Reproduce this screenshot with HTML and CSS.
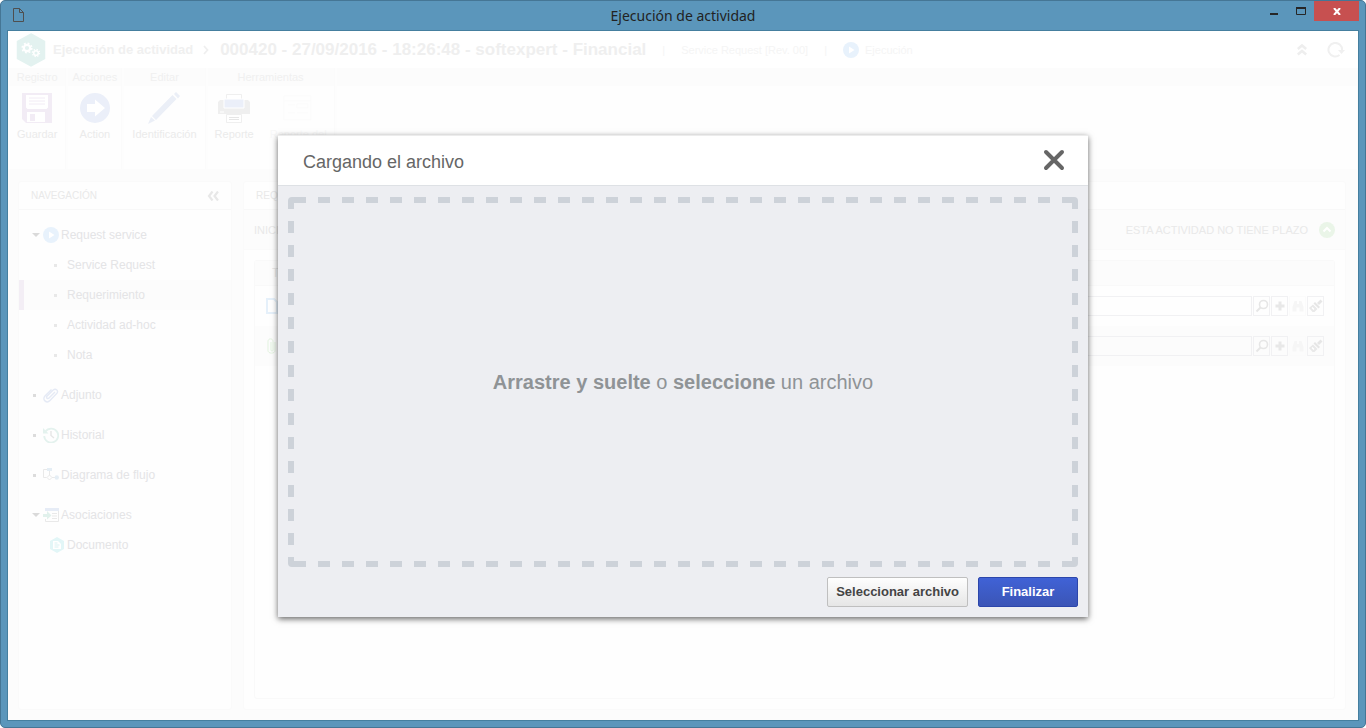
FILE: index.html
```html
<!DOCTYPE html>
<html lang="es">
<head>
    <meta charset="UTF-8">
    <meta name="viewport" content="width=device-width, initial-scale=1.0">
    <title>Ejecución de actividad</title>
    <link rel="stylesheet" href="styles.css">
</head>
<body>
    <!-- Iconos compartidos -->
    <svg class="sprite" aria-hidden="true">
        <symbol id="i-play" viewBox="0 0 16 16">
            <circle cx="8" cy="8" r="8" fill="#e8f2fc"/>
            <path d="M6 4.5v7L11.5 8z" fill="#fff"/>
        </symbol>
        <symbol id="i-search" viewBox="0 0 16 16">
            <circle cx="9.5" cy="6.5" r="4" fill="none" stroke="#e6e6e6" stroke-width="1.6"/>
            <path d="M6.5 9.5L2.5 13.5" stroke="#e6e6e6" stroke-width="2"/>
        </symbol>
        <symbol id="i-plus" viewBox="0 0 16 16">
            <path d="M6.5 3.5h3v3h3v3h-3v3h-3v-3h-3v-3h3z" fill="#e8e8e8"/>
        </symbol>
        <symbol id="i-find" viewBox="0 0 16 16">
            <path d="M4.5 3H7v3h2V3h2.5l2 6v4.5h-4v-4h-3v4h-4V9z" fill="#f6f6f6"/>
        </symbol>
        <symbol id="i-brush" viewBox="0 0 16 16">
            <path d="M12.5 1.5l2 2L11 7 9 5z" fill="#e6e6e6"/>
            <path d="M7 4l5 5-1.500 1.500-5-5z" fill="#e6e6e6"/>
            <path d="M5 6.500L9.500 11l-3 3H4.500l-3.500-4z" fill="#e9e9e9"/>
            <path d="M4 9.500l2 2" stroke="#fff" stroke-width="1.500"/>
        </symbol>
    </svg>

    <div class="window">
        <header class="titlebar">
            <svg class="app-icon" viewBox="0 0 11 14"><path d="M.5 .5h6l4 4v9H.5zM6.5 .5v4h4" fill="none" stroke="#4f4f4f"/></svg>
            <h1>Ejecución de actividad</h1>
            <div class="window-buttons">
                <button aria-label="Minimizar"><svg width="10" height="10" viewBox="0 0 10 10"><path d="M1 7h8v2H1z" fill="#262626"/></svg></button>
                <button aria-label="Maximizar"><svg width="10" height="8" viewBox="0 0 10 8"><path d="M.5 .5h9v7h-9z" fill="none" stroke="#262626"/><path d="M0 0h10v2H0z" fill="#262626"/></svg></button>
                <button class="win-close" aria-label="Cerrar"><svg width="8" height="7" viewBox="0 0 8 7"><path d="M1 0l6 7M7 0L1 7" stroke="#fff" stroke-width="2"/></svg></button>
            </div>
        </header>

        <main class="content">
            <div class="heading">
                <svg class="logo" viewBox="0 0 30 34">
                    <path d="M15 1l13.5 7.5v17L15 33 1.5 25.5v-17z" fill="#e3f2f0" stroke="#e3f2f0" stroke-width="1.5"/>
                    <circle cx="11" cy="15" r="3.2" fill="none" stroke="#fff" stroke-width="2.2"/>
                    <circle cx="11" cy="15" r="4.8" fill="none" stroke="#fff" stroke-width="1.6" stroke-dasharray="1.9 1.87"/>
                    <circle cx="20" cy="20" r="2.3" fill="none" stroke="#fff" stroke-width="1.6"/>
                    <circle cx="20" cy="20" r="3.6" fill="none" stroke="#fff" stroke-width="1.2" stroke-dasharray="1.4 1.43"/>
                </svg>
                <span class="crumb">Ejecución de actividad</span>
                <svg class="crumb-arrow" viewBox="0 0 6 10"><path d="M1 1l3.5 4L1 9" fill="none" stroke="#efefef" stroke-width="1.8"/></svg>
                <span class="record">000420 - 27/09/2016 - 18:26:48 - softexpert - Financial</span>
                <span class="meta">|</span>
                <span class="meta">Service Request [Rev. 00]</span>
                <span class="meta">|</span>
                <span class="meta state"><svg width="16" height="16"><use href="#i-play"/></svg>Ejecución</span>
                <div class="heading-tools">
                    <button aria-label="Contraer"><svg width="10" height="13" viewBox="0 0 10 13"><path d="M.8 6L5 2.5 9.200 6M.8 11.5L5 8l4.200 3.500" fill="none" stroke="#eee" stroke-width="2.5"/></svg></button>
                    <button aria-label="Actualizar"><svg width="18" height="16" viewBox="0 0 18 16"><path d="M12.5 13A6.800 6.800 0 1 1 15 8.500" fill="none" stroke="#f0f0f0" stroke-width="2"/><path d="M11 8h7l-3.500 4z" fill="#f0f0f0"/></svg></button>
                </div>
            </div>

            <div class="toolbar">
                <section class="group">
                    <h2>Registro</h2>
                    <div class="tools">
                        <button>
                            <svg width="32" height="32" viewBox="0 0 32 32"><path d="M1 1h30v30H5l-4-4z" fill="#f2ecf5"/><path d="M5 3h22v12.500l-1.500 1.500h-19L5 15.500zM6 20h20v10H6z" fill="#fff"/><path d="M8 6h16M8 9h16M8 12h16" stroke="#f2ecf5"/><path d="M9 22h5v7H9zM24 20h2v10h-2z" fill="#f2ecf5"/></svg>
                            Guardar
                        </button>
                    </div>
                </section>
                <section class="group">
                    <h2>Acciones</h2>
                    <div class="tools">
                        <button>
                            <svg width="32" height="32" viewBox="0 0 32 32"><circle cx="16" cy="16" r="15" fill="#ebeff9"/><path d="M8 12h8V7.500L26 16l-10 8.500V20H8z" fill="#fff"/></svg>
                            Action
                        </button>
                    </div>
                </section>
                <section class="group">
                    <h2>Editar</h2>
                    <div class="tools">
                        <button>
                            <svg width="32" height="32" viewBox="0 0 32 32"><path d="M26 2l2-2 4 4-2 2.500zM24.500 3l4 4L8 28l-4-4zM3 25l4 3.500L0 32z" fill="#ebeff7"/></svg>
                            Identificación
                        </button>
                    </div>
                </section>
                <section class="group">
                    <h2>Herramientas</h2>
                    <div class="tools wide">
                        <button>
                            <svg width="32" height="32" viewBox="0 0 32 32"><path d="M2 8h28l2 2v12H0V10z" fill="#efefef"/><path d="M8.500 2.500h15v13h-15zM8.500 22.500h15v8h-15z" fill="#fff" stroke="#efefef"/><path d="M6 7h20v9H6z" fill="#ebeff9" stroke="#fff"/><path d="M2 20h4" stroke="#fff"/><path d="M11 25.500h10M11 27.500h10" stroke="#e6e6e6"/></svg>
                            Reporte
                        </button>
                        <button class="off" disabled>
                            <svg width="32" height="32" viewBox="0 0 32 32"><path d="M2 4h27v5H2zM2 9v19h27V9M6 13h7M15 12h11v4H15zM6 21h7M15 21h11" fill="none" stroke="#fbfbfb"/></svg>
                            Reporte del
                        </button>
                    </div>
                </section>
                <section class="group rest"><h2></h2></section>
            </div>

            <div class="panels">
                <nav class="panel nav">
                    <h2 class="panel-title">NAVEGACIÓN
                        <button aria-label="Ocultar"><svg width="12" height="10" viewBox="0 0 12 10"><path d="M5.500 .5L2 5l3.500 4.500M11 .5L7.500 5l3.500 4.500" fill="none" stroke="#e8e8e8" stroke-width="2.2"/></svg></button>
                    </h2>
                    <ul class="tree">
                        <li>
                            <a href="#"><i class="caret"></i><svg width="16" height="16"><use href="#i-play"/></svg>Request service</a>
                            <ul>
                                <li><a href="#"><i class="dot"></i>Service Request</a></li>
                                <li><a href="#" class="active"><i class="dot"></i>Requerimiento</a></li>
                                <li><a href="#"><i class="dot"></i>Actividad ad-hoc</a></li>
                                <li><a href="#"><i class="dot"></i>Nota</a></li>
                            </ul>
                        </li>
                        <li><a href="#"><i class="dot dark"></i><svg width="16" height="16" viewBox="0 0 16 16"><path d="M12 5L6 11c-1.500 1.500-3.300-.4-1.800-1.900l6-6c2.500-2.500 6 1 3.500 3.500L7 13.500c-3.500 3.500-8.300-1-5-4.500l6.500-6.500" fill="none" stroke="#e5eaf5" stroke-width="1.4"/></svg>Adjunto</a></li>
                        <li><a href="#"><i class="dot dark"></i><svg width="16" height="16" viewBox="0 0 16 16"><path d="M2.500 4.500A7 7 0 1 1 1.200 9" fill="none" stroke="#e4f2ee" stroke-width="1.8"/><path d="M0 1v5.500h5.500z" fill="#e4f2ee"/><path d="M8 4v4.500l3 2.500" fill="none" stroke="#e6e6e6" stroke-width="1.4"/></svg>Historial</a></li>
                        <li><a href="#"><i class="dot dark"></i><svg width="16" height="16" viewBox="0 0 16 16"><path d="M5 2.500H.5v8h3M6.500 4v4M6.500 8L9 10.500 6.500 13 4 10.500zM9 10.500h3" fill="none" stroke="#e9e9e9"/><path d="M4 1h5v3H4z" fill="#e5eef5"/><circle cx="13.800" cy="10.500" r="2.200" fill="#e5eef5"/></svg>Diagrama de flujo</a></li>
                        <li>
                            <a href="#"><i class="caret"></i><svg width="16" height="16" viewBox="0 0 16 16"><path d="M2 1h14v3H2z" fill="#e6ecf6"/><path d="M15.500 4v10.500h-13V12M9 6.500h5M9 9h5M9 11.500h5" fill="none" stroke="#e9e9e9"/><path d="M0 7h4V4l4.500 4.500L4 12.500V10H0z" fill="#e1f1ec"/></svg>Asociaciones</a>
                            <ul>
                                <li><a href="#" class="doc"><svg width="16" height="16" viewBox="0 0 16 16"><path d="M8 0l7 4v8l-7 4-7-4V4z" fill="#e2f6f7"/><path d="M4 4h5l3 3v5H4z" fill="#fff"/><path d="M5.500 6h3M5.500 8h5M5.500 10h4" stroke="#d9f1f2"/></svg>Documento</a></li>
                            </ul>
                        </li>
                    </ul>
                </nav>

                <section class="panel detail">
                    <h2 class="panel-title">REQUERIMIENTO</h2>
                    <div class="status">
                        <span>INICIO</span>
                        <span class="due">ESTA ACTIVIDAD NO TIENE PLAZO</span>
                        <svg width="16" height="16" viewBox="0 0 16 16"><circle cx="8" cy="8" r="8" fill="#eaf5e8"/><path d="M4.500 9.500L8 6l3.500 3.500" fill="none" stroke="#fff" stroke-width="2"/></svg>
                    </div>
                    <div class="form">
                        <div class="form-title">Tipo</div>
                        <div class="field">
                            <svg width="12" height="16" viewBox="0 0 12 16"><path d="M1 1h7l3 3v11H1z" fill="none" stroke="#e5f0fa" stroke-width="2"/></svg>
                            <input type="text" aria-label="Documento">
                            <div class="field-tools">
                                <button aria-label="Buscar"><svg width="16" height="16"><use href="#i-search"/></svg></button>
                                <button aria-label="Agregar"><svg width="16" height="16"><use href="#i-plus"/></svg></button>
                                <button class="off" aria-label="Ver" disabled><svg width="16" height="16"><use href="#i-find"/></svg></button>
                                <button aria-label="Limpiar"><svg width="16" height="16"><use href="#i-brush"/></svg></button>
                            </div>
                        </div>
                        <div class="field alt">
                            <svg width="12" height="16" viewBox="0 0 12 16"><path d="M5 4v8c0 1.500 2 1.500 2 0V3.500c0-3.500-5-3.500-5 0v9c0 3.500 7 3.500 7 0V4" fill="none" stroke="#e2f3df"/></svg>
                            <input type="text" aria-label="Adjunto">
                            <div class="field-tools">
                                <button aria-label="Buscar"><svg width="16" height="16"><use href="#i-search"/></svg></button>
                                <button aria-label="Agregar"><svg width="16" height="16"><use href="#i-plus"/></svg></button>
                                <button class="off" aria-label="Ver" disabled><svg width="16" height="16"><use href="#i-find"/></svg></button>
                                <button aria-label="Limpiar"><svg width="16" height="16"><use href="#i-brush"/></svg></button>
                            </div>
                        </div>
                    </div>
                </section>
            </div>

            <div class="overlay">
                <div class="modal" role="dialog" aria-labelledby="modal-title">
                    <div class="modal-header">
                        <h2 id="modal-title">Cargando el archivo</h2>
                        <button class="modal-close" aria-label="Cerrar"><svg width="22" height="22" viewBox="0 0 22 22"><path d="M3 3l16 16M19 3L3 19" stroke="#666" stroke-width="4" stroke-linecap="round"/></svg></button>
                    </div>
                    <div class="modal-body">
                        <div class="dropzone">
                            <p><b>Arrastre y suelte</b> o <b>seleccione</b> un archivo</p>
                        </div>
                        <div class="modal-actions">
                            <button class="btn">Seleccionar archivo</button>
                            <button class="btn primary">Finalizar</button>
                        </div>
                    </div>
                </div>
            </div>
        </main>
    </div>
</body>
</html>
```

FILE: styles.css
```css
* {
    margin: 0;
    padding: 0;
    box-sizing: border-box;
}

body {
    background: #fff;
    font-family: "Liberation Sans", Arial, sans-serif;
    font-size: 12px;
    color: #e8e8e8;
}

button {
    border: none;
    background: none;
    font: inherit;
    color: inherit;
    cursor: pointer;
}

ul {
    list-style: none;
}

a {
    color: inherit;
    text-decoration: none;
}

svg {
    display: block;
    flex: none;
}

.sprite {
    position: absolute;
    width: 0;
    height: 0;
}

/* Ventana */
.window {
    display: flex;
    flex-direction: column;
    height: 100vh;
    padding: 0 6px 6px;
    background: #5b96bb;
    border: 1px solid #457695;
    border-radius: 5px;
    overflow: hidden;
}

.titlebar {
    display: grid;
    grid-template-columns: 1fr auto 1fr;
    height: 29px;
    flex: none;
}

.titlebar h1 {
    font-family: "Noto Sans", "Open Sans", sans-serif;
    font-size: 14px;
    font-weight: normal;
    line-height: 29px;
    color: #222;
}

.app-icon {
    width: 11px;
    height: 14px;
    margin: 7px 0 0 6px;
}

.window-buttons {
    display: flex;
    justify-content: flex-end;
}

.window-buttons button {
    display: flex;
    justify-content: center;
    align-items: center;
    width: 27px;
    height: 20px;
}

.window-buttons .win-close {
    width: 45px;
    background: #c75050;
}

/* Contenido */
.content {
    position: relative;
    display: flex;
    flex-direction: column;
    flex: 1;
    min-height: 0;
    background: #fcfcfc;
    border: 1px solid #457f9f;
}

.heading {
    display: flex;
    align-items: center;
    height: 37px;
    padding: 0 13px 0 8px;
    background: #fff;
}

.logo {
    width: 30px;
    height: 34px;
}

.crumb {
    margin-left: 7px;
    font-size: 13px;
    font-weight: bold;
    color: #f0f0f0;
}

.crumb-arrow {
    width: 6px;
    height: 10px;
    margin: 0 11px 0 10px;
}

.record {
    font-size: 17px;
    font-weight: bold;
    color: #efefef;
}

.meta {
    margin-left: 16px;
    font-size: 11px;
    color: #f5f5f5;
}

.state {
    display: flex;
    align-items: center;
    gap: 6px;
}

.heading-tools {
    display: flex;
    align-items: center;
    gap: 20px;
    margin-left: auto;
}

/* Barra de herramientas */
.toolbar {
    display: flex;
    gap: 2px;
    height: 101px;
    flex: none;
    padding-left: 1px;
    background: #fdfdfd;
}

.group {
    background: #fefefe;
    min-width: 54px;
    border-right: 1px solid #fbfbfb;
}

.group h2 {
    height: 18px;
    background: #fcfcfc;
    font-size: 11px;
    font-weight: normal;
    line-height: 18px;
    text-align: center;
    color: #f0f0f0;
}

.tools {
    display: flex;
    justify-content: center;
    padding: 6px 8px;
}

.tools button {
    display: flex;
    flex-direction: column;
    align-items: center;
    gap: 3px;
    font-size: 11px;
    line-height: 14px;
    color: #ebebeb;
}

.tools.wide {
    gap: 16px;
    padding: 6px 7px;
}

.tools .off {
    color: #f8f8f8;
}

.rest {
    flex: 1;
}

/* Paneles */
.panels {
    display: grid;
    grid-template-columns: 214px 1fr;
    gap: 11px;
    flex: 1;
    min-height: 0;
    padding: 12px 12px 10px 10px;
}

.panel {
    display: flex;
    flex-direction: column;
    background: #fefefe;
    border: 1px solid #fafafa;
    border-radius: 3px;
}

.panel-title {
    display: flex;
    justify-content: space-between;
    align-items: center;
    height: 28px;
    padding: 0 12px;
    border-bottom: 1px solid #f8f8f8;
    font-size: 10px;
    font-weight: normal;
    color: #e9e9e9;
}

.tree {
    display: flex;
    flex-direction: column;
    gap: 10px;
    padding-top: 10px;
    color: #e4e4e6;
}

.tree a {
    display: flex;
    align-items: center;
    height: 30px;
    padding-left: 13px;
    gap: 2px;
}

.tree ul a {
    padding-left: 35px;
    gap: 10px;
}

.tree ul .active {
    padding-left: 30px;
    background: #fcfcfc;
    border-left: 5px solid #f3eef5;
}

.tree ul .doc {
    padding-left: 30px;
    gap: 2px;
}

.caret {
    margin-right: 1px;
    border: 4px solid transparent;
    border-top-color: #dadada;
    border-bottom: none;
}

.dot {
    width: 3px;
    height: 3px;
    background: #e8e8e8;
}

.dot.dark {
    margin-right: 5px;
    margin-left: 1px;
    background: #dcdcdc;
}

.status {
    display: flex;
    align-items: center;
    height: 40px;
    padding: 0 10px;
    border-bottom: 1px solid #fafafa;
    background: #fcfcfc;
    font-size: 11px;
    color: #e9e9e9;
}

.due {
    margin: 0 11px 0 auto;
}

.form {
    flex: 1;
    margin: 10px;
    border: 1px solid #f9f9f9;
    border-radius: 3px;
}

.form-title {
    height: 25px;
    padding-left: 17px;
    background: #fcfcfc;
    border-bottom: 1px solid #f9f9f9;
    line-height: 24px;
}

.field {
    display: flex;
    align-items: center;
    gap: 10px;
    height: 40px;
    padding: 0 10px 0 11px;
}

.field.alt {
    background: #fcfcfc;
}

.field input {
    flex: 1;
    height: 20px;
    border: 1px solid #f1f1f3;
    background: transparent;
}

.field-tools {
    display: flex;
    gap: 1px;
    margin-left: -9px;
}

.field-tools button {
    display: flex;
    justify-content: center;
    align-items: center;
    width: 17px;
    height: 20px;
    border: 1px solid #f1f1f3;
}

.field-tools .off {
    border-color: #fbfbfb;
}

/* Ventana modal */
.overlay {
    position: absolute;
    inset: 0;
    display: flex;
    justify-content: center;
    align-items: center;
}

.modal {
    width: 60%;
    background: #edeef2;
    border-top: 1px solid #ececec;
    box-shadow: 0 2px 6px rgba(0, 0, 0, 0.6);
    color: #666;
}

.modal-header {
    display: flex;
    justify-content: space-between;
    align-items: center;
    height: 50px;
    padding: 0 23px 0 25px;
    background: #fff;
    border-bottom: 1px solid #dee1e5;
}

.modal-header h2 {
    padding-top: 4px;
    font-size: 18px;
    font-weight: normal;
}

.modal-body {
    display: flex;
    flex-direction: column;
    gap: 10px;
    padding: 11px 10px 10px;
}

/* Borde discontinuo: trazos de 12px cada 24px */
.dropzone {
    --dash: #cdd2d9 0 12px, transparent 12px 24px;
    display: flex;
    justify-content: center;
    align-items: center;
    height: 370px;
    padding-top: 2px;
    background:
        repeating-linear-gradient(90deg, #cdd2d9 0 6px, transparent 6px 6px, var(--dash)) 6px 0 / 100% 6px no-repeat,
        repeating-linear-gradient(90deg, var(--dash)) 6px 100% / 100% 6px no-repeat,
        repeating-linear-gradient(var(--dash)) 0 0 / 6px 100% no-repeat,
        repeating-linear-gradient(var(--dash)) 100% 0 / 6px 100% no-repeat;
    border-radius: 4px;
    font-size: 20px;
    color: #8f9396;
}

.modal-actions {
    display: flex;
    justify-content: flex-end;
    gap: 10px;
}

.btn {
    min-width: 100px;
    height: 30px;
    padding: 0 8px;
    background: linear-gradient(#fefefe, #e6e6e6);
    border: 1px solid #bfbfbf;
    border-radius: 2px;
    font-size: 13px;
    font-weight: bold;
    color: #444;
}

.btn.primary {
    background: linear-gradient(#4062d6, #3b55b6);
    border-color: #2c46ab;
    color: #fff;
}
```
